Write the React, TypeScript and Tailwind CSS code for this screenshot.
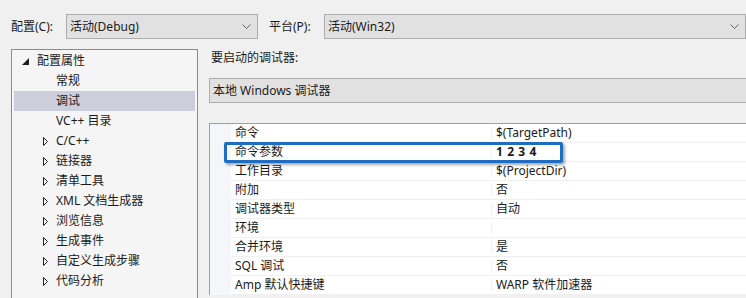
const font = { fontFamily: '"Noto Sans", "Noto Sans CJK SC", sans-serif' };

const Chevron = () => (
  <svg width="9" height="6" viewBox="0 0 9 6" className="shrink-0">
    <polyline points="0.5,0.5 4.5,4.5 8.5,0.5" fill="none" stroke="#606060" strokeWidth="1" />
  </svg>
);

const Combo = ({ text, className }: { text: string; className: string }) => (
  <div className={`flex h-[25px] items-center justify-between border border-[#adadad] bg-[#e1e1e1] pl-[3px] pr-[6px] ${className}`}>
    <span>{text}</span>
    <Chevron />
  </div>
);

const treeItems = [
  { name: "常规", arrow: false },
  { name: "调试", arrow: false, selected: true },
  { name: "VC++ 目录", arrow: false },
  { name: "C/C++", arrow: true },
  { name: "链接器", arrow: true },
  { name: "清单工具", arrow: true },
  { name: "XML 文档生成器", arrow: true },
  { name: "浏览信息", arrow: true },
  { name: "生成事件", arrow: true },
  { name: "自定义生成步骤", arrow: true },
  { name: "代码分析", arrow: true },
];

const props = [
  { name: "命令", value: "$(TargetPath)" },
  { name: "命令参数", value: "1 2 3 4", bold: true },
  { name: "工作目录", value: "$(ProjectDir)" },
  { name: "附加", value: "否" },
  { name: "调试器类型", value: "自动" },
  { name: "环境", value: "" },
  { name: "合并环境", value: "是" },
  { name: "SQL 调试", value: "否" },
  { name: "Amp 默认快捷键", value: "WARP 软件加速器" },
];

const App = () => {
  return (
    <div className="relative h-[298px] w-[746px] overflow-hidden bg-[#f0f0f0] text-[12px] leading-none text-[#1a1a1a]" style={font}>
      {/* top bar */}
      <div className="flex items-center pt-[14px]">
        <span className="ml-[11px] w-[55px]">配置(C):</span>
        <Combo text="活动(Debug)" className="w-[192px]" />
        <span className="ml-[11px] w-[55px]">平台(P):</span>
        <Combo text="活动(Win32)" className="w-[422px]" />
      </div>

      <div className="mt-[10px] flex">
        {/* tree */}
        <div className="ml-[11px] h-[260px] w-[187px] shrink-0 border border-b-0 border-[#8c8c8c] bg-[#f5f5f5] px-px pt-px">
          <div className="flex h-[20px] items-center">
            <svg width="7" height="7" viewBox="0 0 7 7" className="ml-[9px]">
              <polygon points="7,0 7,7 0,7" fill="#1e1e1e" />
            </svg>
            <span className="ml-[8px]">配置属性</span>
          </div>
          {treeItems.map((item, i) => (
            <div key={i} className={`flex h-[20px] items-center ${item.selected ? "mx-px bg-[#cccedb]" : ""}`}>
              <div className="flex w-[43px] justify-end pr-[8px]">
                {item.arrow && (
                  <svg width="5" height="9" viewBox="0 0 5 9">
                    <polygon points="0.5,0.5 4.5,4.5 0.5,8.5" fill="none" stroke="#1e1e1e" strokeWidth="1" />
                  </svg>
                )}
              </div>
              <span className={item.selected ? "-ml-px" : ""}>{item.name}</span>
            </div>
          ))}
        </div>

        {/* right side */}
        <div className="ml-[11px] flex-1">
          <div className="ml-[2px] mt-[3px]">要启动的调试器:</div>
          <div className="mt-[14px] flex h-[25px] items-center border border-r-0 border-[#adadad] bg-[#e1e1e1] pl-[3px]">
            本地 Windows 调试器
          </div>

          <div className="relative mt-[20px] flex border-l border-t border-[#a0a0a0]">
            <div className="w-[21px] shrink-0 bg-[#f4f6f9]" />
            <div className="flex-1 bg-white">
              {props.map((p, i) => (
                <div key={i} className="flex h-[19px] items-center border-b border-[#f0f0f0]">
                  <div className="w-[261px] shrink-0 border-r border-[#f0f0f0] pl-[4px]">{p.name}</div>
                  <div className={`pl-[4px] ${p.bold ? "font-bold tracking-[0.6px]" : ""}`}>{p.value}</div>
                </div>
              ))}
            </div>
            {/* highlight */}
            <div className="absolute left-[14px] top-[18px] h-[21px] w-[339px] rounded-[2px] border-[3px] border-[#1f6dc2] shadow-[2px_2px_3px_rgba(0,0,0,0.35)]" />
          </div>
        </div>
      </div>
    </div>
  );
};

export default App;
